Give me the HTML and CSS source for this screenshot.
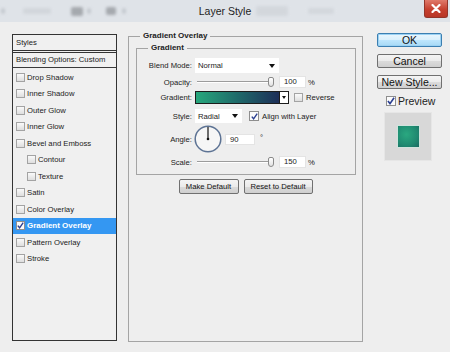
FILE: index.html
```html
<!DOCTYPE html>
<html lang="en">
<head>
<meta charset="UTF-8" />
<title>Layer Style</title>
<link rel="stylesheet" href="styles.css">
</head>
<body>
  <div class="window">
    <div class="titlebar">
      <div class="toolbar-ghost">
        <span class="ghost g1"></span>
        <span class="ghost g2"></span>
        <span class="ghost g3"></span>
        <span class="ghost g4"></span>
        <span class="ghost g5"></span>
        <span class="ghost g6"></span>
        <span class="ghost g7"></span>
        <span class="ghost g8"></span>
      </div>
      <div class="title">Layer Style</div>
      <div class="close">
        <svg width="10" height="9" viewBox="0 0 10 9"><path d="M1.5 1 L8.5 8 M8.5 1 L1.5 8" stroke="#fff" stroke-width="2.2" stroke-linecap="round"/></svg>
      </div>
    </div>

    <div class="main">
      <div class="styles-list">
        <div class="list-head">Styles</div>
        <div class="list-blend">Blending Options: Custom</div>
        <div class="list-items">
          <div class="list-item"><span class="cb"></span>Drop Shadow</div>
          <div class="list-item"><span class="cb"></span>Inner Shadow</div>
          <div class="list-item"><span class="cb"></span>Outer Glow</div>
          <div class="list-item"><span class="cb"></span>Inner Glow</div>
          <div class="list-item"><span class="cb"></span>Bevel and Emboss</div>
          <div class="list-item sub"><span class="cb"></span>Contour</div>
          <div class="list-item sub"><span class="cb"></span>Texture</div>
          <div class="list-item"><span class="cb"></span>Satin</div>
          <div class="list-item"><span class="cb"></span>Color Overlay</div>
          <div class="list-item active"><span class="cb checked"><svg width="7" height="7" viewBox="0 0 7 7"><path d="M0.8 3.6 L2.6 5.8 L6.2 0.6" fill="none" stroke="#2b3f91" stroke-width="1.4"/></svg></span>Gradient Overlay</div>
          <div class="list-item"><span class="cb"></span>Pattern Overlay</div>
          <div class="list-item"><span class="cb"></span>Stroke</div>
        </div>
      </div>

      <fieldset class="group">
        <legend>Gradient Overlay</legend>
        <fieldset class="sub-group">
          <legend>Gradient</legend>

          <div class="row row-blend">
            <label>Blend Mode:</label>
            <div class="ctrl">
              <div class="select wide">Normal<span class="arrow"></span></div>
            </div>
          </div>

          <div class="row row-opacity">
            <label>Opacity:</label>
            <div class="ctrl">
              <div class="slider"><span class="track"></span><span class="thumb"></span></div>
              <div class="num">100</div>
              <span class="unit">%</span>
            </div>
          </div>

          <div class="row row-gradient">
            <label>Gradient:</label>
            <div class="ctrl">
              <div class="swatch"><span class="ramp"></span><span class="drop"><span class="arrow small"></span></span></div>
              <span class="cb"></span>
              <span class="opt">Reverse</span>
            </div>
          </div>

          <div class="row row-style">
            <label>Style:</label>
            <div class="ctrl">
              <div class="select narrow">Radial<span class="arrow"></span></div>
              <span class="cb checked align"><svg width="7" height="7" viewBox="0 0 7 7"><path d="M0.8 3.6 L2.6 5.8 L6.2 0.6" fill="none" stroke="#2b3f91" stroke-width="1.4"/></svg></span>
              <span class="opt">Align with Layer</span>
            </div>
          </div>

          <div class="row row-angle">
            <label>Angle:</label>
            <div class="ctrl">
              <svg class="dial" width="28" height="28" viewBox="0 0 28 28">
                <circle cx="14" cy="14" r="12.8" fill="#f6f6f6" stroke="#5d7394" stroke-width="1.5"/>
                <line x1="14" y1="14" x2="14" y2="2" stroke="#111" stroke-width="1.2"/>
                <circle cx="14" cy="14" r="1.3" fill="#111"/>
              </svg>
              <div class="num angle">90</div>
              <span class="deg">°</span>
            </div>
          </div>

          <div class="row row-scale">
            <label>Scale:</label>
            <div class="ctrl">
              <div class="slider"><span class="track"></span><span class="thumb"></span></div>
              <div class="num">150</div>
              <span class="unit">%</span>
            </div>
          </div>
        </fieldset>

        <div class="defaults">
          <button class="btn small">Make Default</button>
          <button class="btn small">Reset to Default</button>
        </div>
      </fieldset>

      <div class="actions">
        <button class="btn big primary">OK</button>
        <button class="btn big">Cancel</button>
        <button class="btn big">New Style...</button>
        <div class="preview-row">
          <span class="cb checked big-cb"><svg width="8" height="8" viewBox="0 0 7 7"><path d="M0.8 3.6 L2.6 5.8 L6.2 0.6" fill="none" stroke="#2b3f91" stroke-width="1.4"/></svg></span>
          <span>Preview</span>
        </div>
        <div class="preview-box"><span class="preview-square"></span></div>
      </div>
    </div>
  </div>
</body>
</html>
```

FILE: styles.css
```css
/* Base */
* {
  box-sizing: border-box;
}
body {
  margin: 0;
  background: #eeeeee;
  font-family: "Liberation Sans", Arial, sans-serif;
  font-size: 7.7px;
  color: #222;
}

.window {
  width: 450px;
  height: 352px;
  background: #eeeeee;
  overflow: hidden;
}

/* Title bar */
.titlebar {
  position: relative;
  height: 22px;
  background: #dfe3e8;
  display: flex;
  align-items: center;
}
.toolbar-ghost {
  display: flex;
  align-items: center;
  height: 22px;
  filter: blur(1.6px);
  opacity: 0.7;
}
.ghost {
  display: block;
  height: 6px;
  background: #b9bec4;
  border-radius: 2px;
}
.g1 { width: 4px; margin-left: 1px; }
.g2 { width: 28px; margin-left: 18px; background: #cdd1d6; }
.g3 { width: 12px; height: 9px; margin-left: 20px; background: #8d9196; }
.g4 { width: 4px; margin-left: 4px; }
.g5 { width: 10px; height: 8px; margin-left: 15px; background: #8d9196; }
.g6 { width: 4px; margin-left: 6px; }
.g7 { width: 32px; height: 10px; margin-left: 130px; background: #cfd3d8; }
.g8 { width: 26px; margin-left: 20px; background: #cfd3d8; }
.title {
  position: absolute;
  left: 0;
  right: 0;
  top: 5px;
  text-align: center;
  font-size: 10.5px;
  color: #1e1e1e;
}
.close {
  position: absolute;
  right: 2px;
  top: 0;
  width: 24px;
  height: 18px;
  background: linear-gradient(#e07a6b, #c6402f 55%, #b83626);
  border: 1px solid #93352a;
  border-top: none;
  border-radius: 0 0 3px 3px;
  display: flex;
  align-items: center;
  justify-content: center;
}

/* Main area */
.main {
  display: flex;
  align-items: flex-start;
  padding: 9px 0 0 12px;
  border-left: 3px solid #e2e2e2;
  margin-left: -3px;
  height: 330px;
}

/* Styles list */
.styles-list {
  margin-top: 3px;
  width: 105px;
  height: 307px;
  border: 1px solid #333;
  background: #f0f0f0;
}
.list-head {
  height: 18px;
  line-height: 15px;
  padding-left: 3px;
  border-bottom: 3px double #333;
}
.list-blend {
  height: 15px;
  line-height: 14px;
  padding-left: 3px;
  border-bottom: 1px solid #3a3a3a;
}
.list-items {
  padding-top: 1px;
}
.list-item {
  height: 16.5px;
  display: flex;
  align-items: center;
  padding-left: 3px;
}
.list-item.sub {
  padding-left: 14px;
}
.list-item.active {
  background: #3497f2;
  color: #fff;
  font-weight: bold;
  font-size: 8px;
}

.cb {
  width: 9px;
  height: 9px;
  border: 1px solid #a3a3a3;
  background: linear-gradient(#fafafa, #dedede);
  margin-right: 2px;
  display: inline-flex;
  align-items: center;
  justify-content: center;
  flex: none;
}
.cb.checked {
  background: #fbfbfb;
  border-color: #8e8e8e;
}

/* Main settings */
fieldset {
  margin: 0;
  min-width: 0;
}
fieldset legend {
  font-weight: bold;
  font-size: 8px;
  line-height: 10px;
  padding: 0 3px;
}
.group {
  margin-left: 11px;
  width: 235px;
  height: 311px;
  border: 1px solid #a4a4a4;
  padding: 0 7px;
}
.group > legend {
  margin-left: 4px;
}
.sub-group {
  margin-top: 2px;
  width: 220px;
  border: 1px solid #a4a4a4;
  padding: 5px 0 6px 0;
}
.sub-group > legend {
  margin-left: 11px;
}

.row {
  display: grid;
  grid-template-columns: 55px auto;
  column-gap: 3px;
  align-items: center;
}
.row label {
  text-align: right;
}
.ctrl {
  display: flex;
  align-items: center;
  height: 100%;
}
.row-blend { height: 15px; }
.row-opacity { height: 12px; margin-top: 3px; }
.row-gradient { height: 13px; margin-top: 3px; }
.row-style { height: 14px; margin-top: 5px; }
.row-angle { height: 28px; margin-top: 2px; }
.row-scale { height: 12px; margin-top: 3px; }

.select {
  height: 100%;
  background: #fff;
  display: flex;
  align-items: center;
  justify-content: space-between;
  padding: 0 4px 0 3px;
}
.select.wide { width: 84px; }
.select.narrow { width: 47px; }
.arrow {
  width: 0;
  height: 0;
  border-left: 3.5px solid transparent;
  border-right: 3.5px solid transparent;
  border-top: 4px solid #111;
}
.arrow.small {
  border-left-width: 2.5px;
  border-right-width: 2.5px;
  border-top-width: 3px;
}

.slider {
  position: relative;
  width: 80px;
  height: 100%;
  margin-right: 4px;
}
.track {
  position: absolute;
  left: 2px;
  right: 6px;
  top: 5px;
  height: 2px;
  border-top: 1px solid #9c9c9c;
  border-bottom: 1px solid #fff;
}
.thumb {
  position: absolute;
  left: 73px;
  top: 1px;
  width: 6px;
  height: 10px;
  border: 1px solid #8a8a8a;
  border-radius: 2px 2px 3px 3px;
  background: linear-gradient(#fff, #e2e2e2);
}
.num {
  width: 27px;
  height: 12px;
  background: #fff;
  border: 1px solid #e4e4e4;
  line-height: 10px;
  padding-left: 4px;
}
.unit {
  margin-left: 2px;
}

.swatch {
  width: 94px;
  height: 13px;
  border: 1px solid #1c1c1c;
  display: flex;
}
.ramp {
  flex: 1;
  background: linear-gradient(90deg, #27a77c, #1f6a6a 50%, #1d2e58);
}
.drop {
  width: 9px;
  background: #fff;
  border-left: 1px solid #1c1c1c;
  display: flex;
  align-items: center;
  justify-content: center;
}
.row-gradient .cb {
  margin-left: 5px;
  width: 9px;
  height: 9px;
}
.opt {
  margin-left: 1px;
}
.cb.align {
  margin-left: 7px;
  width: 10px;
  height: 10px;
}

.dial {
  margin-left: -1px;
}
.num.angle {
  width: 30px;
  height: 11px;
  margin-left: 3px;
  line-height: 9px;
}
.deg {
  margin-left: 5px;
  align-self: flex-start;
  margin-top: 8px;
}

.defaults {
  display: flex;
  justify-content: center;
  gap: 5px;
  margin-top: 4px;
}

/* Buttons */
.btn {
  font-family: "Liberation Sans", Arial, sans-serif;
  color: #111;
  border: 1px solid #707070;
  border-radius: 2px;
  background: linear-gradient(#f4f4f4, #ebebeb 50%, #dbdbdb 51%, #cfcfcf);
  padding: 0;
  margin: 0;
}
.btn.small {
  height: 15px;
  font-size: 7.7px;
}
.btn.small:first-child { width: 60px; }
.btn.small:last-child { width: 69px; }
.btn.big {
  display: block;
  width: 65px;
  height: 14px;
  font-size: 10.5px;
  line-height: 12px;
  margin-bottom: 7px;
}
.btn.primary {
  border-color: #3c7fb1;
  background: linear-gradient(#eaf6fd, #d9f0fc 50%, #bee6fd 51%, #a7d9f5);
  box-shadow: inset 0 0 0 1px #9cd2f3;
}

/* Right column */
.actions {
  margin-left: 14px;
  margin-top: 2px;
  width: 65px;
  font-size: 10.5px;
}
.preview-row {
  display: flex;
  align-items: center;
  height: 11px;
  padding-left: 9px;
  margin-top: -1px;
}
.cb.big-cb {
  width: 10px;
  height: 10px;
  margin-right: 2px;
}
.preview-box {
  margin: 6px 0 0 7px;
  width: 48px;
  height: 49px;
  background: #d8d8d8;
  border: 1px solid #e6e6e6;
  display: flex;
  align-items: center;
  justify-content: center;
}
.preview-square {
  width: 23px;
  height: 23px;
  background: radial-gradient(circle at 40% 40%, #2aa880, #1f8a71 60%, #1a6a62);
  border: 1px solid #cfe3dc;
}
```
